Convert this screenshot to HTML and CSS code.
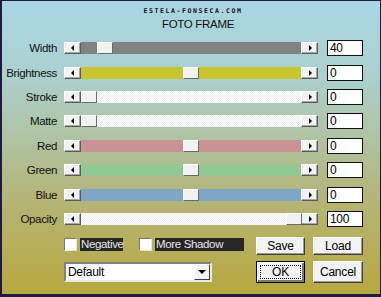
FILE: index.html
```html
<!DOCTYPE html>
<html lang="en">
<head>
  <meta charset="UTF-8" />
  <title>Foto Frame</title>
  <link rel="stylesheet" href="styles.css">
</head>
<body>
  <div class="window">
    <div class="header">
      <div class="site">ESTELA-FONSECA.COM</div>
      <div class="title">FOTO FRAME</div>
    </div>

    <div class="rows">
      <div class="row">
        <span class="label">Width</span>
        <div class="slider">
          <span class="arrow left"></span>
          <div class="track grey"><span class="thumb" style="left: 16px"></span></div>
          <span class="arrow right"></span>
        </div>
        <input class="value" type="text" value="40">
      </div>
      <div class="row">
        <span class="label">Brightness</span>
        <div class="slider">
          <span class="arrow left"></span>
          <div class="track yellow"><span class="thumb" style="left: 102px"></span></div>
          <span class="arrow right"></span>
        </div>
        <input class="value" type="text" value="0">
      </div>
      <div class="row">
        <span class="label">Stroke</span>
        <div class="slider">
          <span class="arrow left"></span>
          <div class="track white"><span class="thumb" style="left: 0px"></span></div>
          <span class="arrow right"></span>
        </div>
        <input class="value" type="text" value="0">
      </div>
      <div class="row">
        <span class="label">Matte</span>
        <div class="slider">
          <span class="arrow left"></span>
          <div class="track white"><span class="thumb" style="left: 0px"></span></div>
          <span class="arrow right"></span>
        </div>
        <input class="value" type="text" value="0">
      </div>
      <div class="row">
        <span class="label">Red</span>
        <div class="slider">
          <span class="arrow left"></span>
          <div class="track red"><span class="thumb" style="left: 102px"></span></div>
          <span class="arrow right"></span>
        </div>
        <input class="value" type="text" value="0">
      </div>
      <div class="row">
        <span class="label">Green</span>
        <div class="slider">
          <span class="arrow left"></span>
          <div class="track green"><span class="thumb" style="left: 102px"></span></div>
          <span class="arrow right"></span>
        </div>
        <input class="value" type="text" value="0">
      </div>
      <div class="row">
        <span class="label">Blue</span>
        <div class="slider">
          <span class="arrow left"></span>
          <div class="track blue"><span class="thumb" style="left: 102px"></span></div>
          <span class="arrow right"></span>
        </div>
        <input class="value" type="text" value="0">
      </div>
      <div class="row">
        <span class="label">Opacity</span>
        <div class="slider">
          <span class="arrow left"></span>
          <div class="track white"><span class="thumb" style="left: 205px"></span></div>
          <span class="arrow right"></span>
        </div>
        <input class="value" type="text" value="100">
      </div>
    </div>

    <div class="bottom">
      <div class="options">
        <div class="checks">
          <label class="check"><span class="box"></span><span class="check-text">Negative</span></label>
          <label class="check"><span class="box"></span><span class="check-text">More Shadow</span></label>
        </div>
        <div class="select">
          <span class="select-text">Default</span>
          <span class="select-btn"><span class="down"></span></span>
        </div>
      </div>
      <div class="buttons">
        <button class="btn">Save</button>
        <button class="btn">Load</button>
        <button class="btn default"><span class="focus">OK</span></button>
        <button class="btn tall">Cancel</button>
      </div>
    </div>
  </div>
</body>
</html>
```

FILE: styles.css
```css
* {
  margin: 0;
  padding: 0;
  box-sizing: border-box;
}

body {
  width: 381px;
  height: 297px;
  overflow: hidden;
  font-family: "Liberation Sans", Arial, sans-serif;
}

/* Window */
.window {
  width: 381px;
  height: 297px;
  border-style: solid;
  border-color: #1d1c3e;
  border-width: 1px 1px 3px 2px;
  background: linear-gradient(#a9d6e4 0%, #abd0cf 25%, #afc4a6 45%, #b4b67c 65%, #b8a83f 100%);
  display: flex;
  flex-direction: column;
}

.header {
  height: 35px;
  display: flex;
  flex-direction: column;
  align-items: center;
  padding-top: 6px;
  padding-left: 4px;
}

.site {
  font-family: "DejaVu Sans Mono", monospace;
  font-size: 6.5px;
  font-weight: bold;
  letter-spacing: 1.6px;
  color: #111;
  line-height: 8px;
}

.title {
  font-size: 11.5px;
  letter-spacing: -0.3px;
  color: #111;
  line-height: 14px;
  margin-top: 2px;
  padding-left: 10px;
}

/* Slider rows */
.rows {
  display: flex;
  flex-direction: column;
}

.row {
  height: 24.43px;
  display: flex;
  align-items: center;
}

.label {
  width: 55px;
  text-align: right;
  font-size: 11.5px;
  letter-spacing: -0.35px;
  color: #111;
  margin-right: 7px;
}

.slider {
  width: 254px;
  height: 12px;
  display: flex;
}

.arrow {
  width: 17px;
  height: 12px;
  background: #f2f2f2;
  border: 1px solid;
  border-color: #fff #5a5a5a #5a5a5a #fff;
  box-shadow: inset -1px -1px #a8a8a8;
  display: flex;
  align-items: center;
  justify-content: center;
}

.arrow::after {
  content: "";
  width: 0;
  height: 0;
  border-top: 3px solid transparent;
  border-bottom: 3px solid transparent;
}

.arrow.left::after {
  border-right: 3px solid #000;
  margin-left: -1px;
}

.arrow.right::after {
  border-left: 3px solid #000;
  margin-left: 1px;
}

.track {
  flex: 1;
  position: relative;
}

.track.grey { background: #818181; }
.track.yellow { background: #c8c62f; }
.track.red { background: #c99294; }
.track.green { background: #94c893; }
.track.blue { background: #7fa6c9; }
.track.white {
  background: repeating-conic-gradient(#ffffff 0 25%, #ececec 0 50%) 0 0 / 2px 2px;
}

.thumb {
  position: absolute;
  top: 0;
  width: 16px;
  height: 12px;
  background: #f2f2f2;
  border: 1px solid;
  border-color: #fff #6a6a6a #6a6a6a #fff;
}

.value {
  width: 36px;
  height: 16px;
  margin-left: 9px;
  border: 1px solid #111;
  background: #fff;
  font-family: "Liberation Sans", Arial, sans-serif;
  font-size: 12px;
  letter-spacing: -0.3px;
  color: #000;
  padding-left: 2px;
  outline: none;
}

/* Bottom area */
.bottom {
  display: flex;
  padding-top: 6px;
}

.options {
  margin-left: 62px;
  width: 192px;
  display: flex;
  flex-direction: column;
}

.checks {
  display: flex;
  gap: 16px;
  height: 14px;
}

.check {
  display: flex;
  align-items: center;
  gap: 3px;
}

.box {
  width: 13px;
  height: 13px;
  background: #fff;
  border: 1px solid;
  border-color: #7a7a7a #e6e6e6 #e6e6e6 #7a7a7a;
}

.check-text {
  background: #262626;
  color: #e8e8e8;
  font-size: 11.5px;
  letter-spacing: -0.35px;
  height: 13px;
  line-height: 13px;
  padding: 0 1px;
}

.check:first-child .check-text {
  width: 43px;
}

.check + .check .check-text {
  width: 89px;
}

.select {
  width: 148px;
  height: 20px;
  margin-top: 11px;
  background: #fff;
  border: 2px solid;
  border-color: #808080 #e8e8e8 #e8e8e8 #808080;
  display: flex;
  align-items: center;
}

.select-text {
  flex: 1;
  font-size: 12px;
  letter-spacing: -0.3px;
  padding-left: 2px;
  color: #000;
}

.select-btn {
  width: 16px;
  height: 16px;
  background: #f2f2f2;
  border: 1px solid;
  border-color: #fff #404040 #404040 #fff;
  display: flex;
  align-items: center;
  justify-content: center;
}

.down {
  width: 0;
  height: 0;
  border-left: 4px solid transparent;
  border-right: 4px solid transparent;
  border-top: 4px solid #000;
}

.buttons {
  display: grid;
  grid-template-columns: 49px 50px;
  grid-template-rows: 18px 22px;
  column-gap: 8px;
  row-gap: 6px;
}

.btn {
  font-family: "Liberation Sans", Arial, sans-serif;
  font-size: 12px;
  letter-spacing: -0.2px;
  color: #000;
  background: #f3f3f3;
  border: 1px solid;
  border-color: #fff #404040 #404040 #fff;
  box-shadow: inset -1px -1px #9a9a9a;
}

.btn.default {
  border: 1px solid #000;
  box-shadow: inset 1px 1px #fff, inset -2px -2px #7a7a7a;
  padding: 3px;
  display: flex;
}

.focus {
  flex: 1;
  border: 1px dotted #000;
  display: flex;
  align-items: center;
  justify-content: center;
}
```
